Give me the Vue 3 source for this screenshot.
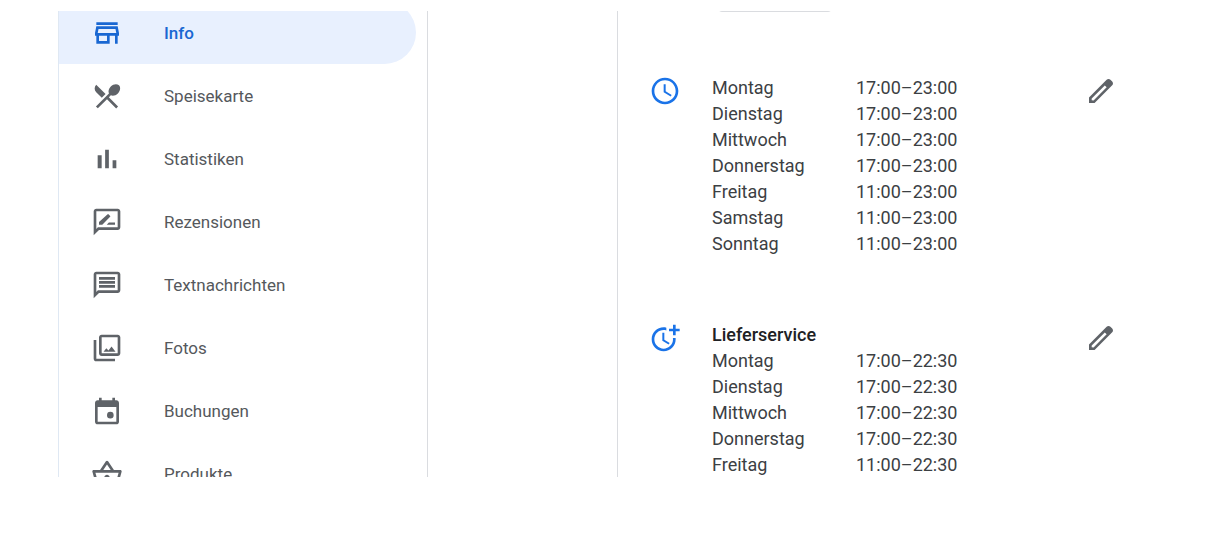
<script setup>
const navItems = [
  { label: 'Info', active: true, path: 'M18.36 9l.6 3H5.04l.6-3h12.72M20 4H4v2h16V4zm0 3H4l-1 5v2h1v6h10v-6h4v6h2v-6h1v-2l-1-5zM6 18v-4h6v4H6z' },
  { label: 'Speisekarte', path: 'M8.1 13.34l2.83-2.83L3.91 3.5c-1.56 1.56-1.56 4.09 0 5.66l4.19 4.18zm6.78-1.81c1.53.71 3.68.21 5.27-1.38 1.91-1.91 2.28-4.65.81-6.12-1.46-1.46-4.2-1.1-6.12.81-1.59 1.59-2.09 3.74-1.38 5.27L3.7 19.87l1.41 1.41L12 14.41l6.88 6.88 1.41-1.41L13.41 13l1.47-1.47z' },
  { label: 'Statistiken', path: 'M5 9.2h3V19H5zM10.6 5h2.8v14h-2.8zM16.2 13H19v6h-2.8z' },
  { label: 'Rezensionen', path: 'M20 2H4c-1.1 0-1.99.9-1.99 2L2 22l4-4h14c1.1 0 2-.9 2-2V4c0-1.1-.9-2-2-2zm0 14H5.17L4 17.17V4h16v12zM11.8 14H18v-1.6h-4.6zm2.56-5.87c.2-.2.2-.51 0-.71l-1.17-1.17c-.2-.2-.51-.2-.71 0L6 12.03V14h2.47l5.89-5.87z' },
  { label: 'Textnachrichten', path: 'M20 2H4c-1.1 0-1.99.9-1.99 2L2 22l4-4h14c1.1 0 2-.9 2-2V4c0-1.1-.9-2-2-2zm0 14H5.17L4 17.17V4h16v12zM6 12h12v2H6zM6 9h12v2H6zM6 6h12v2H6z' },
  { label: 'Fotos', path: 'M20 4v12H8V4h12m0-2H8c-1.1 0-2 .9-2 2v12c0 1.1.9 2 2 2h12c1.1 0 2-.9 2-2V4c0-1.1-.9-2-2-2zM2 6v14c0 1.1.9 2 2 2h14v-2H4V6H2zM9.4 14.9l2.1-2.7 1.6 1.6 2.3-2.9 3 4z' },
  { label: 'Buchungen', path: 'M19 4h-1V2h-2v2H8V2H6v2H5c-1.11 0-1.99.9-1.99 2L3 20c0 1.1.89 2 2 2h14c1.1 0 2-.9 2-2V6c0-1.1-.9-2-2-2zm0 16H5V9h14v11zM14.5 12.6a2.5 2.5 0 1 0 0 5a2.5 2.5 0 1 0 0-5z' },
  { label: 'Produkte', path: 'M22 9h-4.79l-4.38-6.56c-.19-.28-.51-.42-.83-.42s-.64.14-.83.43L6.79 9H2c-.55 0-1 .45-1 1 0 .09.01.18.04.27l2.54 9.27c.23.84 1 1.46 1.92 1.46h13c.92 0 1.69-.62 1.93-1.46l2.54-9.27L23 10c0-.55-.45-1-1-1zM12 4.8L14.8 9H9.2L12 4.8zM18.5 19l-12.99.01L3.31 11H20.7l-2.2 8zM12 12.6c-1.1 0-2 .9-2 2s.9 2 2 2 2-.9 2-2-.9-2-2-2z' }
]

const clock = 'M11.99 2C6.47 2 2 6.48 2 12s4.47 10 9.99 10C17.52 22 22 17.52 22 12S17.52 2 11.99 2zM12 20c-4.42 0-8-3.58-8-8s3.58-8 8-8 8 3.58 8 8-3.58 8-8 8zm.5-13H11v6l5.25 3.15.75-1.23-4.5-2.67z'
const clockPlus = 'M10 8v6l4.7 2.9.8-1.2-4-2.4V8zM17.92 12c.05.33.08.66.08 1 0 3.9-3.1 7-7 7s-7-3.1-7-7 3.1-7 7-7c.7 0 1.37.1 2 .29V4.23c-.64-.15-1.31-.23-2-.23-5 0-9 4-9 9s4 9 9 9 9-4 9-9c0-.34-.02-.67-.06-1h-2.02zM20 5V2h-2v3h-3v2h3v3h2V7h3V5z'
const pencil = 'M20.41 4.94l-1.35-1.35c-.78-.78-2.05-.78-2.83 0L3 16.82V21h4.18L20.41 7.77c.79-.78.79-2.05 0-2.83zm-14 14.12L5 19l.02-1.36 9.82-9.83 1.41 1.41-9.84 9.84z'

const sections = [
  {
    id: 'opening',
    icon: clock,
    hours: [
      ['Montag', '17:00–23:00'],
      ['Dienstag', '17:00–23:00'],
      ['Mittwoch', '17:00–23:00'],
      ['Donnerstag', '17:00–23:00'],
      ['Freitag', '11:00–23:00'],
      ['Samstag', '11:00–23:00'],
      ['Sonntag', '11:00–23:00']
    ]
  },
  {
    id: 'delivery',
    title: 'Lieferservice',
    icon: clockPlus,
    hours: [
      ['Montag', '17:00–22:30'],
      ['Dienstag', '17:00–22:30'],
      ['Mittwoch', '17:00–22:30'],
      ['Donnerstag', '17:00–22:30'],
      ['Freitag', '11:00–22:30']
    ]
  }
]
</script>

<template>
  <div class="page">
    <div class="viewport">
      <nav class="sidebar">
        <ul class="nav-list">
          <li v-for="item in navItems" :key="item.label">
            <a href="#" class="nav-link" :class="{ active: item.active }">
              <svg class="icon" viewBox="0 0 24 24" aria-hidden="true"><path :d="item.path" fill-rule="evenodd" /></svg>
              <span>{{ item.label }}</span>
            </a>
          </li>
        </ul>
      </nav>
      <main class="card">
        <div class="chip-edge"></div>
        <section v-for="section in sections" :key="section.id" class="entry">
          <svg class="icon entry-icon" viewBox="0 0 24 24" aria-hidden="true"><path :d="section.icon" /></svg>
          <div class="entry-body">
            <h2 v-if="section.title" class="entry-title">{{ section.title }}</h2>
            <table class="hours">
              <tbody>
                <tr v-for="[day, time] in section.hours" :key="day">
                  <th scope="row">{{ day }}</th>
                  <td>{{ time }}</td>
                </tr>
              </tbody>
            </table>
          </div>
          <button type="button" class="edit" aria-label="Bearbeiten">
            <svg class="icon" viewBox="0 0 24 24" aria-hidden="true"><path :d="pencil" /></svg>
          </button>
        </section>
      </main>
    </div>
  </div>
</template>

<style>
body {
  background: #fff;
}
</style>

<style scoped>
.page {
  box-sizing: border-box;
  height: 100vh;
  padding: 11px 0 75px 58px;
  font-family: Roboto, "Liberation Sans", sans-serif;
  color: #3c4043;
}
.viewport {
  display: flex;
  gap: 189px;
  height: 100%;
  overflow: hidden;
}
.sidebar {
  box-sizing: border-box;
  flex: 0 0 370px;
  border-left: 1px solid #dfe8f3;
  border-right: 1px solid #dadce0;
}
.nav-list {
  list-style: none;
  margin: -10px 11px 0 0;
  padding: 0;
}
.nav-link {
  display: flex;
  align-items: center;
  gap: 41px;
  height: 63px;
  padding-left: 32px;
  border-radius: 0 32px 32px 0;
  color: #55585c;
  font-size: 17px;
  text-decoration: none;
}
.nav-link.active {
  background: #e8f0fe;
  color: #1967d2;
  font-weight: 500;
}
.icon {
  display: block;
  flex: none;
  width: 32px;
  height: 32px;
  fill: #5f6368;
}
.active .icon {
  fill: #1967d2;
}
.card {
  flex: 1;
  border-left: 1px solid #dadce0;
}
.chip-edge {
  box-sizing: border-box;
  width: 116px;
  height: 40px;
  margin: -39px 0 63px 99px;
  border: 1px solid #dadce0;
  border-radius: 5px;
}
.entry {
  display: grid;
  grid-template-columns: 32px 1fr 32px;
  column-gap: 31px;
  align-items: start;
  margin-bottom: 65px;
  padding: 0 115px 0 31px;
}
.entry-icon {
  fill: #1a73e8;
}
.entry-title {
  margin: 0;
  color: #202124;
  font-size: 18px;
  font-weight: 500;
  line-height: 26px;
}
.hours {
  border-collapse: collapse;
  font-size: 18px;
  line-height: 26px;
}
.hours th,
.hours td {
  padding: 0;
  font-weight: 400;
  text-align: left;
}
.hours th {
  width: 144px;
}
.edit {
  padding: 0;
  border: 0;
  background: none;
  cursor: pointer;
}
</style>
